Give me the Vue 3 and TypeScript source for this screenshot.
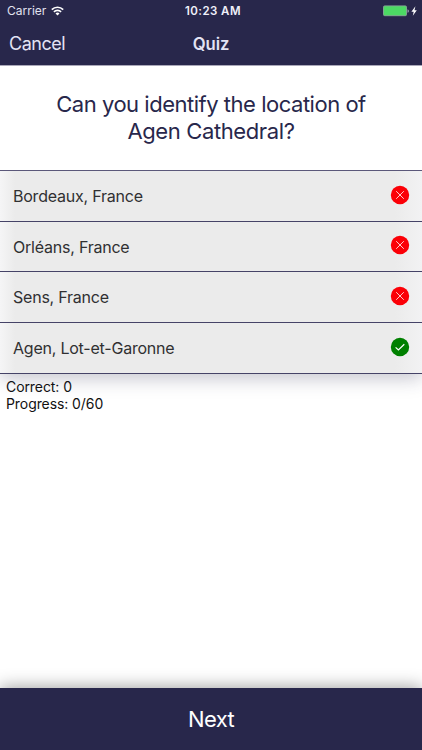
<script setup lang="ts">
interface Answer {
  label: string
  correct: boolean
}

const answers: Answer[] = [
  { label: 'Bordeaux, France', correct: false },
  { label: 'Orléans, France', correct: false },
  { label: 'Sens, France', correct: false },
  { label: 'Agen, Lot-et-Garonne', correct: true },
]
const correctCount = 0
const answered = 0
const total = 60
</script>

<template>
  <div class="screen">
    <header class="header">
      <div class="status">
        <div class="carrier">
          <span>Carrier</span>
          <svg class="wifi" viewBox="0 0 13 10" width="13" height="10">
            <g fill="none" stroke="#fff" stroke-width="1.7">
              <path d="M.8 3.6a8.1 8.1 0 0 1 11.4 0" />
              <path d="M2.9 5.9a5.1 5.1 0 0 1 7.2 0" />
            </g>
            <path d="M6.5 9.6 4.5 7.6a2.8 2.8 0 0 1 4 0z" fill="#fff" />
          </svg>
        </div>
        <span class="time">10:23 AM</span>
        <div class="power">
          <svg viewBox="0 0 36 12" width="36" height="12">
            <rect x=".5" y=".9" width="23" height="9.8" rx="1.2" fill="#4cd964" stroke="#87a996" stroke-width=".9" />
            <path d="M24.6 4.2c1.5.4 1.5 3.2 0 3.6z" fill="#b9c4cb" />
            <path d="M32.4 1.2 28.4 6.7h2.3l-.9 4.1 4-5.5h-2.3z" fill="#fff" />
          </svg>
        </div>
      </div>
      <nav class="nav">
        <span class="cancel">Cancel</span>
        <span class="heading">Quiz</span>
        <span></span>
      </nav>
    </header>
    <main class="content">
      <h1 class="question">
        <span class="line">Can you identify the location of</span>
        <span class="line line-name">Agen Cathedral?</span>
      </h1>
      <ul class="answers">
        <li v-for="answer in answers" :key="answer.label" class="answer">
          <span class="label">{{ answer.label }}</span>
          <svg class="mark" viewBox="0 0 20 20" width="20" height="20">
            <circle cx="10" cy="10" r="9.2" :fill="answer.correct ? '#008000' : '#fb0007'" />
            <path v-if="answer.correct" d="m5.6 10.4 2.8 2.6 5.9-5.8" fill="none" stroke="#fff" stroke-width="1.2" />
            <path v-else d="m6.2 6.2 7.6 7.6m0-7.6-7.6 7.6" fill="none" stroke="#ffc9c9" stroke-width="1" />
          </svg>
        </li>
      </ul>
      <div class="score">
        <div>Correct: {{ correctCount }}</div>
        <div>Progress: {{ answered }}/{{ total }}</div>
      </div>
    </main>
    <footer class="next"><span>Next</span></footer>
  </div>
</template>

<style>
body {
  margin: 0;
  background: #fff;
}
</style>

<style scoped>
.screen {
  display: flex;
  flex-direction: column;
  width: 422px;
  height: 750px;
  overflow: hidden;
  background: #fff;
  font-family: Inter, "Liberation Sans", sans-serif;
}
.header {
  box-sizing: border-box;
  height: 66px;
  background: #28274b;
  border-bottom: 1px solid #aaa8b9;
  color: #f0f0fa;
}
.status,
.nav {
  display: grid;
  grid-template-columns: 1fr auto 1fr;
  align-items: center;
}
.status {
  height: 22px;
  padding: 0 4px 0 7px;
  font-size: 12px;
  line-height: 22px;
}
.carrier {
  display: flex;
  align-items: center;
  gap: 5px;
  color: #e2e2ef;
}
.time {
  padding-left: 1px;
  font-weight: 600;
  font-size: 11.5px;
  letter-spacing: 0.42px;
}
.power {
  display: flex;
  justify-content: flex-end;
  margin-right: -1px;
}
.nav {
  height: 43px;
  padding: 0 9px;
}
.cancel {
  font-size: 18px;
  letter-spacing: -0.5px;
  color: #e3e3f4;
}
.heading {
  font-size: 16.7px;
  font-weight: 600;
  letter-spacing: -0.1px;
  color: #e3e3f4;
}
.content {
  flex: 1;
}
.question {
  box-sizing: border-box;
  height: 104px;
  margin: 0;
  padding-top: 25px;
  font-size: 22px;
  line-height: 27px;
  font-weight: 400;
  text-align: center;
  color: #28274b;
}
.line {
  display: block;
  letter-spacing: -0.48px;
}
.line-name {
  letter-spacing: -0.38px;
}
.answers {
  margin: 0;
  padding: 0;
  list-style: none;
  border-top: 1px solid #5b587a;
  box-shadow: 0 4px 18px rgba(40, 39, 75, 0.28);
  clip-path: inset(0 0 -40px 0);
}
.answer {
  box-sizing: border-box;
  display: flex;
  align-items: center;
  justify-content: space-between;
  height: 50.7px;
  padding: 0 12px 0 13px;
  border-bottom: 1px solid #454367;
  background: linear-gradient(90deg, #f5f5f6, #ebebeb 15px, #ebebeb 395px, #f2f2f3);
}
.label {
  font-size: 16px;
  letter-spacing: -0.22px;
  color: #303032;
}
.mark {
  margin-bottom: 2.4px;
}
.score {
  padding: 4px 6px;
  font-size: 14px;
  line-height: 17.5px;
  letter-spacing: -0.08px;
  color: #111;
}
.next {
  display: flex;
  align-items: center;
  justify-content: center;
  height: 62px;
  background: #28274b;
  box-shadow: 0 -1px 16px rgba(0, 0, 0, 0.38);
  color: #fff;
  font-size: 22px;
  letter-spacing: -0.6px;
}
</style>
